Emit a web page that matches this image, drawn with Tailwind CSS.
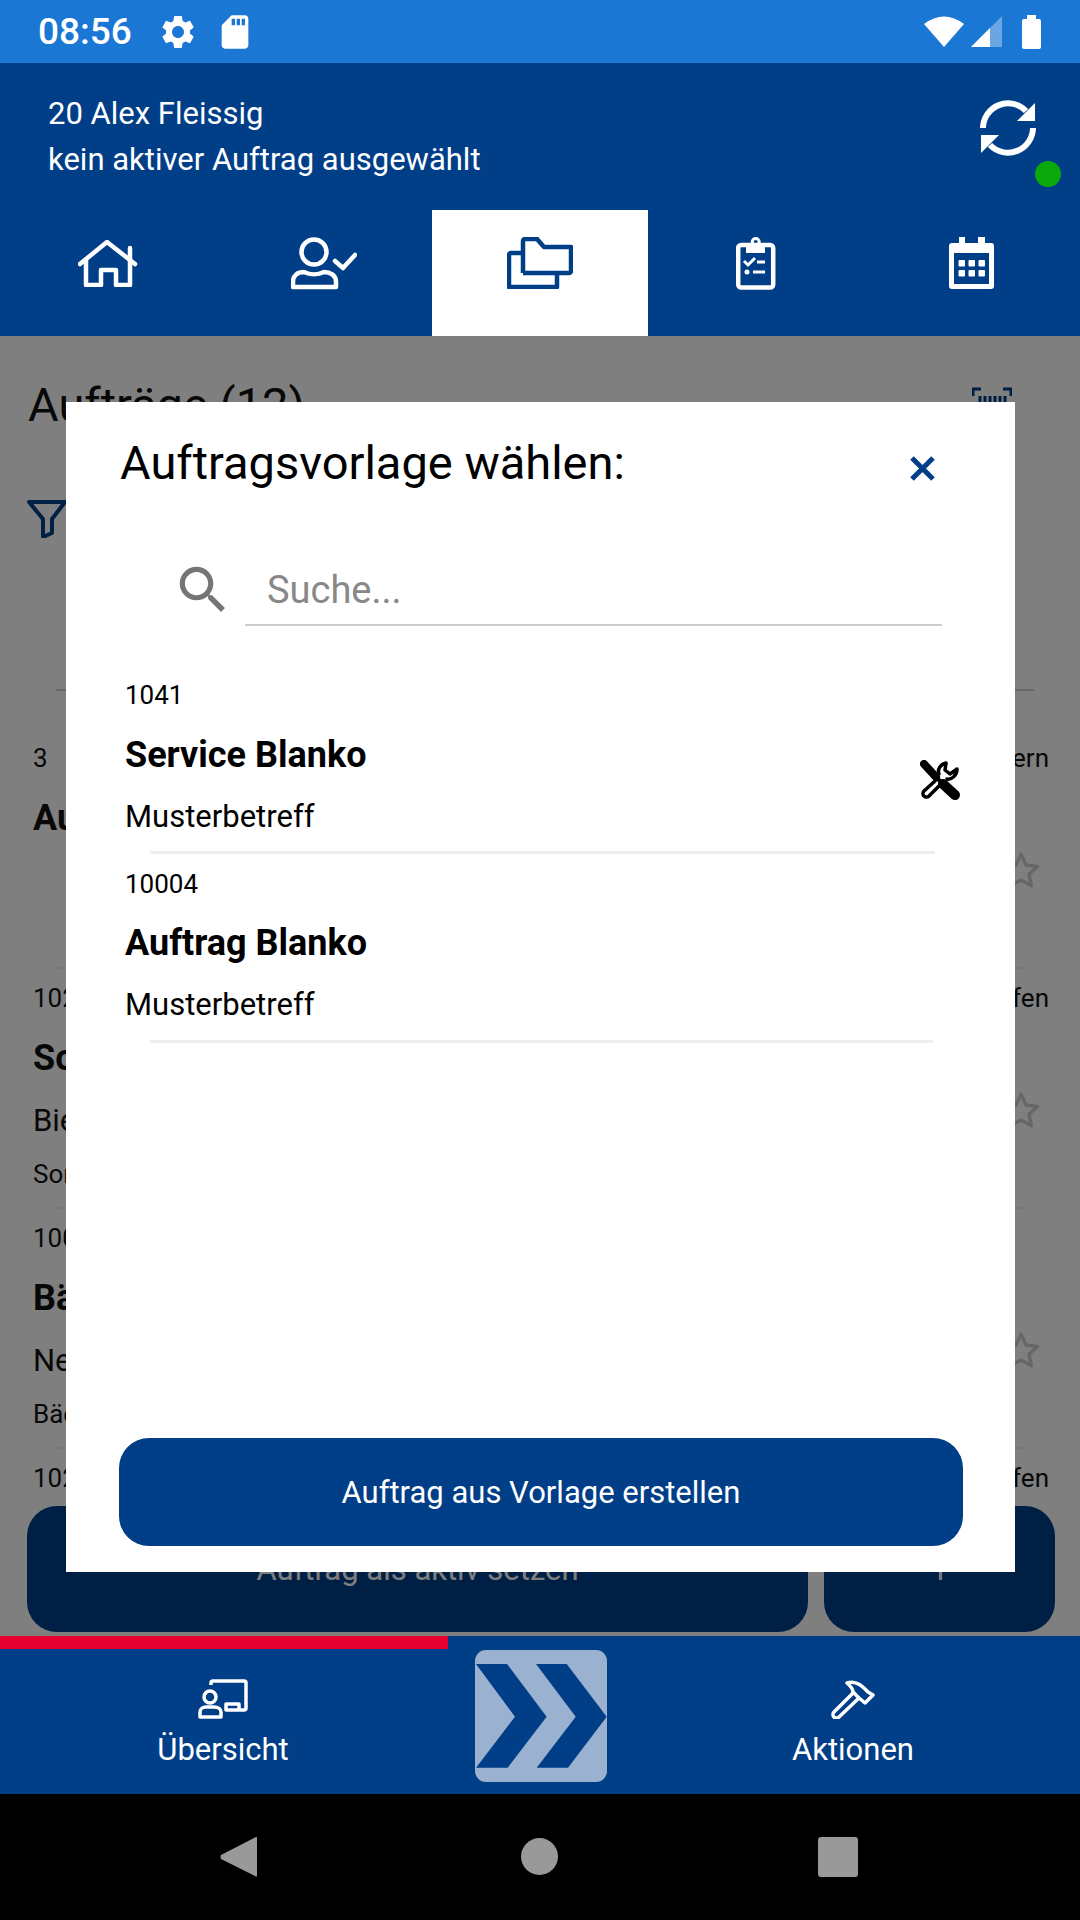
<!DOCTYPE html>
<html lang="de">
<head>
<meta charset="utf-8">
<script src="https://cdn.jsdelivr.net/npm/@tailwindcss/browser@4"></script>
</head>
<body>
<div class="relative w-[1080px] h-[1920px] overflow-hidden flex flex-col bg-white font-['Roboto',sans-serif]">

  <!-- status bar -->
  <div class="h-[63px] shrink-0 bg-[#1a77d4] flex items-center text-white">
    <span class="ml-[38px] w-[92px] text-[37px] font-medium leading-none whitespace-nowrap">08:56</span>
    <svg class="ml-[28px] w-[40px] h-[40px]" viewBox="0 0 24 24" fill="#fff"><path d="M19.14 12.94c.04-.3.06-.61.06-.94 0-.32-.02-.64-.07-.94l2.03-1.58c.18-.14.23-.41.12-.61l-1.92-3.32c-.12-.22-.37-.29-.59-.22l-2.39.96c-.5-.38-1.03-.7-1.62-.94l-.36-2.54c-.04-.24-.24-.41-.48-.41h-3.84c-.24 0-.43.17-.47.41l-.36 2.54c-.59.24-1.13.57-1.62.94l-2.39-.96c-.22-.08-.47 0-.59.22L2.74 8.87c-.12.21-.08.47.12.61l2.03 1.58c-.05.3-.09.63-.09.94s.02.64.07.94l-2.03 1.58c-.18.14-.23.41-.12.61l1.92 3.32c.12.22.37.29.59.22l2.39-.96c.5.38 1.03.7 1.62.94l.36 2.54c.05.24.24.41.48.41h3.84c.24 0 .44-.17.47-.41l.36-2.54c.59-.24 1.13-.56 1.62-.94l2.39.96c.22.08.47 0 .59-.22l1.92-3.32c.12-.22.07-.47-.12-.61l-2.01-1.58zM12 15.6c-1.98 0-3.6-1.62-3.6-3.6s1.62-3.6 3.6-3.6 3.6 1.62 3.6 3.6-1.62 3.6-3.6 3.6z"/></svg>
    <svg class="ml-[17px] w-[40px] h-[40px]" viewBox="0 0 24 24" fill="#fff"><path d="M18 2h-8L4.02 8 4 20c0 1.1.9 2 2 2h12c1.1 0 2-.9 2-2V4c0-1.1-.9-2-2-2zm-6 6h-2V4h2v4zm3 0h-2V4h2v4zm3 0h-2V4h2v4z"/></svg>
    <div class="flex-1"></div>
    <svg class="w-[40px] h-[32px]" viewBox="0 0 40 32" fill="#fff"><path d="M20 31 L0 8 Q20 -7 40 8 Z"/></svg>
    <svg class="ml-[7px] w-[31px] h-[32px]" viewBox="0 0 31 32"><path d="M0 31 L31 0 V31 Z" fill="#fff" fill-opacity="0.35"/><path d="M0 31 L19 12 V31 Z" fill="#fff"/></svg>
    <svg class="ml-[20px] mr-[39px] w-[19px] h-[34px]" viewBox="0 0 19 34" fill="#fff"><path d="M5 0 H14 V4 H17 a2 2 0 0 1 2 2 V32 a2 2 0 0 1 -2 2 H2 a2 2 0 0 1 -2 -2 V6 a2 2 0 0 1 2 -2 H5 Z"/></svg>
  </div>

  <!-- header -->
  <div class="h-[273px] shrink-0 bg-[#003e88] flex flex-col text-white">
    <div class="relative h-[147px] pl-[48px] pt-[28px] text-[31px] leading-[46px]">
      <div>20 Alex Fleissig</div>
      <div>kein aktiver Auftrag ausgewählt</div>
      <svg class="absolute left-[980px] top-[37px] w-[56px] h-[56px]" viewBox="0 0 56 56" fill="none" stroke="#fff" stroke-width="6">
        <path d="M3 28 A25 25 0 0 1 46 11"/><path d="M53 28 A25 25 0 0 1 10 45"/>
        <path d="M55 3 V21 H37 Z" fill="#fff" stroke="none"/><path d="M1 53 V35 H19 Z" fill="#fff" stroke="none"/>
      </svg>
      <div class="absolute left-[1035px] top-[98px] w-[26px] h-[26px] rounded-full bg-[#0aa80a]"></div>
    </div>
    <div class="h-[126px] grid grid-cols-5">
      <div class="flex justify-center pt-[30px]">
        <svg class="w-[60px] h-[47px]" viewBox="0 0 60 47" fill="none" stroke="#fff" stroke-width="4.5" stroke-linecap="round" stroke-linejoin="round"><path d="M2 24 L29 2 L57 24"/><path d="M8 20 V45 H23 V30 H38 V45 H52 V8"/></svg>
      </div>
      <div class="flex justify-center pt-[27px]">
        <svg class="w-[66px] h-[53px]" viewBox="0 0 66 53" fill="none" stroke="#fff" stroke-width="4.5" stroke-linecap="round" stroke-linejoin="round"><circle cx="23" cy="15" r="12.5"/><path d="M2 50 V45 C2 38 7 35 13 35 C19 38 27 38 33 35 C39 35 45 38 45 45 V50 Z"/><path d="M44 24 L52 31 L64 18"/></svg>
      </div>
      <div class="flex justify-center pt-[27px] bg-white">
        <svg class="w-[66px] h-[52px]" viewBox="0 0 66 52" fill="none" stroke="#003e88" stroke-width="4.5" stroke-linejoin="round"><path d="M16 36 V4 a2 2 0 0 1 2 -2 H30 L37 10 H64 V34 a2 2 0 0 1 -2 2 H16"/><path d="M16 16 H4 a2 2 0 0 0 -2 2 V50 H50 V37"/></svg>
      </div>
      <div class="flex justify-center pt-[27px]">
        <svg class="w-[40px] h-[53px]" viewBox="0 0 40 53" fill="none" stroke="#fff"><rect x="2.2" y="8" width="35" height="42.5" rx="3" stroke-width="4.5"/><rect x="10" y="6" width="19" height="10" fill="#fff" stroke="none"/><circle cx="19.7" cy="5" r="3.5" stroke-width="3"/><path d="M8 24 L12 28 L19 21 M21 25 H29 M17 35 H29" stroke-width="3"/><circle cx="11" cy="35" r="2.5" fill="#fff" stroke="none"/></svg>
      </div>
      <div class="flex justify-center pt-[27px]">
        <svg class="w-[46px] h-[53px]" viewBox="0 0 46 53" fill="#fff"><path d="M10 0 H16 V6 H29 V0 H36 V6 H42 a3 3 0 0 1 3 3 V49 a3 3 0 0 1 -3 3 H3 a3 3 0 0 1 -3 -3 V9 a3 3 0 0 1 3 -3 H10 Z M5 16 V47 H40 V16 Z" fill-rule="evenodd"/><rect x="9.5" y="23" width="6.5" height="6.5" rx="1"/><rect x="19.5" y="23" width="6.5" height="6.5" rx="1"/><rect x="29.5" y="23" width="6.5" height="6.5" rx="1"/><rect x="9.5" y="33" width="6.5" height="6.5" rx="1"/><rect x="19.5" y="33" width="6.5" height="6.5" rx="1"/><rect x="29.5" y="33" width="6.5" height="6.5" rx="1"/></svg>
      </div>
    </div>
  </div>

  <!-- main content beneath the dialog -->
  <div class="relative h-[1300px] shrink-0 overflow-hidden bg-white text-[#111]">
    <div class="flex justify-between items-start pl-[28px] pr-[68px] pt-[43px] h-[164px]">
      <div class="text-[47px] leading-[52px]">Aufträge (12)</div>
      <svg class="w-[40px] h-[30px] mt-[8px]" viewBox="0 0 40 30" fill="none" stroke="#003e88" stroke-width="3"><path d="M1 9 V2 H9 M31 2 H39 V9"/><path d="M8 9 V26 M13 9 V26 M18 9 V26 M23 9 V26 M28 9 V26 M33 9 V26"/></svg>
    </div>
    <div class="pl-[27px] h-[189px]">
      <svg class="w-[40px] h-[38px]" viewBox="0 0 40 38" fill="none" stroke="#003e88" stroke-width="4" stroke-linejoin="round"><path d="M2 2 H38 L25 19 V33 L16 37 V19 Z"/></svg>
    </div>
    <div class="ml-[56px] mr-[46px] h-[2px] bg-[#ccc]"></div>
    <div class="h-[276px] pl-[33px] pr-[31px] pt-[52px] flex justify-between">
      <div class="w-[33px] overflow-hidden whitespace-nowrap">
        <div class="text-[26px] leading-[30px]">3</div>
        <div class="text-[36px] leading-[40px] font-bold mt-[25px]">Auftrag</div>
      </div>
      <div class="flex flex-col items-end">
        <div class="w-[35px] overflow-hidden whitespace-nowrap flex justify-end text-[26px] leading-[30px]">Liefern</div>
        <svg class="w-[42px] h-[40px] mr-[7px] mt-[77px]" viewBox="0 0 24 24" fill="none" stroke="#ccc" stroke-width="2" stroke-linejoin="round"><path d="M12 2.5 L15 9 L22 9.8 L16.8 14.5 L18.2 21.5 L12 18 L5.8 21.5 L7.2 14.5 L2 9.8 L9 9 Z"/></svg>
      </div>
    </div>
    <div class="mx-[56px] h-[2px] bg-[#eee]"></div>
    <div class="h-[238px] pl-[33px] pr-[31px] pt-[14px] flex justify-between">
      <div class="w-[33px] overflow-hidden whitespace-nowrap">
        <div class="text-[26px] leading-[30px]">102</div>
        <div class="text-[36px] leading-[40px] font-bold mt-[25px]">Sonderauftrag</div>
        <div class="text-[31px] leading-[36px] mt-[25px]">Bielefeld</div>
        <div class="text-[26px] leading-[30px] mt-[20px]">Sonder</div>
      </div>
      <div class="flex flex-col items-end">
        <div class="w-[35px] overflow-hidden whitespace-nowrap flex justify-end text-[26px] leading-[30px]">Prüfen</div>
        <svg class="w-[42px] h-[40px] mr-[7px] mt-[77px]" viewBox="0 0 24 24" fill="none" stroke="#ccc" stroke-width="2" stroke-linejoin="round"><path d="M12 2.5 L15 9 L22 9.8 L16.8 14.5 L18.2 21.5 L12 18 L5.8 21.5 L7.2 14.5 L2 9.8 L9 9 Z"/></svg>
      </div>
    </div>
    <div class="mx-[56px] h-[2px] bg-[#eee]"></div>
    <div class="h-[238px] pl-[33px] pr-[31px] pt-[14px] flex justify-between">
      <div class="w-[33px] overflow-hidden whitespace-nowrap">
        <div class="text-[26px] leading-[30px]">100</div>
        <div class="text-[36px] leading-[40px] font-bold mt-[25px]">Bäckerei</div>
        <div class="text-[31px] leading-[36px] mt-[25px]">Neustadt</div>
        <div class="text-[26px] leading-[30px] mt-[20px]">Bäcker</div>
      </div>
      <div class="flex flex-col items-end">
        <svg class="w-[42px] h-[40px] mr-[7px] mt-[107px]" viewBox="0 0 24 24" fill="none" stroke="#ccc" stroke-width="2" stroke-linejoin="round"><path d="M12 2.5 L15 9 L22 9.8 L16.8 14.5 L18.2 21.5 L12 18 L5.8 21.5 L7.2 14.5 L2 9.8 L9 9 Z"/></svg>
      </div>
    </div>
    <div class="mx-[56px] h-[2px] bg-[#eee]"></div>
    <div class="pl-[33px] pr-[31px] pt-[14px] flex justify-between">
      <div class="w-[33px] overflow-hidden whitespace-nowrap text-[26px] leading-[30px]">102</div>
      <div class="w-[35px] overflow-hidden whitespace-nowrap flex justify-end text-[26px] leading-[30px]">Prüfen</div>
    </div>

    <!-- bottom buttons of the page -->
    <div class="absolute left-[27px] right-[25px] bottom-[4px] h-[126px] flex gap-[16px] text-white text-[31px]">
      <div class="w-[781px] rounded-[30px] bg-[#003e88] flex items-center justify-center pt-[2px]">Auftrag als aktiv setzen</div>
      <div class="flex-1 rounded-[30px] bg-[#003e88] flex items-center justify-center pt-[2px]">1</div>
    </div>

    <!-- dim -->
    <div class="absolute inset-0 bg-black/50"></div>

    <!-- dialog -->
    <div class="absolute left-[66px] top-[66px] w-[949px] h-[1170px] bg-white text-black flex flex-col">
      <div class="h-[124px] pl-[54px] pr-[80px] pt-[31px] flex justify-between items-start">
        <div class="text-[47px] leading-[60px] whitespace-nowrap">Auftragsvorlage wählen:</div>
        <svg class="w-[25px] h-[25px] mt-[23px]" viewBox="0 0 25 25" fill="none" stroke="#003e88" stroke-width="5"><path d="M2 2 L23 23 M23 2 L2 23"/></svg>
      </div>
      <div class="h-[100px] pl-[106px] flex items-start">
        <svg class="w-[62px] h-[62px] mt-[33px]" viewBox="0 0 24 24" fill="#757575"><path d="M15.5 14h-.79l-.28-.27C15.41 12.59 16 11.11 16 9.5 16 5.91 13.09 3 9.5 3S3 5.91 3 9.5 5.91 16 9.5 16c1.61 0 3.09-.59 4.23-1.57l.27.28v.79l5 4.99L20.49 19l-4.99-5zm-6 0C7.01 14 5 11.99 5 9.5S7.01 5 9.5 5 14 7.01 14 9.5 11.99 14 9.5 14z"/></svg>
        <div class="ml-[11px] w-[697px] h-[100px] border-b-2 border-[#ccc] pl-[22px] pt-[39px] text-[38px] leading-[50px] text-[#888]">Suche...</div>
      </div>
      <div class="relative mt-[39px] h-[189px] pl-[59px] pt-[15px]">
        <div class="text-[26px] leading-[30px]">1041</div>
        <div class="text-[36px] leading-[42px] font-bold mt-[24px]">Service Blanko</div>
        <div class="text-[31px] leading-[40px] mt-[21px]">Musterbetreff</div>
        <div class="absolute left-[84px] w-[785px] top-[186px] h-[3px] bg-[#eee]"></div>
        <svg class="absolute left-[854px] top-[95px] w-[40px] h-[40px]" viewBox="0 0 40 40"><path d="M4 4 L16 17" stroke="#000" stroke-width="8" stroke-linecap="round"/><path d="M13 14 L24 25" stroke="#000" stroke-width="4"/><path d="M23 24 L35 35" stroke="#000" stroke-width="10" stroke-linecap="round"/><path d="M15 21 L4 31 A3 3 0 0 0 9 36 L19 26 M26 3 C21 4 17 9 19 14 M27 19 C32 20 37 15 37 9" fill="none" stroke="#000" stroke-width="3.5" stroke-linecap="round"/><path d="M26 3 L25 10 L30 14 L37 9" fill="none" stroke="#000" stroke-width="3.5" stroke-linejoin="round"/></svg>
      </div>
      <div class="relative h-[189px] pl-[59px] pt-[15px]">
        <div class="text-[26px] leading-[30px]">10004</div>
        <div class="text-[36px] leading-[42px] font-bold mt-[23px]">Auftrag Blanko</div>
        <div class="text-[31px] leading-[40px] mt-[21px]">Musterbetreff</div>
        <div class="absolute left-[84px] w-[783px] top-[186px] h-[3px] bg-[#eee]"></div>
      </div>
      <div class="flex-1"></div>
      <div class="ml-[53px] mr-[52px] mb-[26px] h-[108px] pt-[2px] rounded-[30px] bg-[#003e88] text-white text-[31px] flex items-center justify-center">Auftrag aus Vorlage erstellen</div>
    </div>
  </div>

  <!-- bottom bar -->
  <div class="relative h-[158px] shrink-0 bg-[#003e88] text-white text-[31px]">
    <div class="absolute left-0 top-0 w-[448px] h-[13px] bg-[#e60032]"></div>
    <div class="grid grid-cols-[448px_186px_446px] h-full">
      <div class="flex flex-col items-center pt-[43px] pr-[2px]">
        <svg class="w-[50px] h-[40px]" viewBox="0 0 50 40" fill="none" stroke="#fff" stroke-width="3.5" stroke-linejoin="round"><circle cx="12" cy="18" r="6"/><path d="M2 38 V33 C2 30 5 28 8 28 H16 C20 28 23 30 23 33 V38 Z"/><path d="M13 6 V4 a2 2 0 0 1 2 -2 H46 a2 2 0 0 1 2 2 V29 a2 2 0 0 1 -2 2 H28 V25 H41 V31"/></svg>
        <div class="leading-[36px] mt-[13px]">Übersicht</div>
      </div>
      <div class="flex items-start justify-center pt-[14px]">
        <svg class="w-[132px] h-[132px]" viewBox="0 0 132 132"><rect width="132" height="132" rx="11" fill="#9ab1d0"/><path d="M1 14 H32 L71.6 66.7 L32.7 117.7 H1 L40 66.7 Z M61 14 H91.7 L131.7 66.7 L93 117.7 H61.7 L100.7 66.7 Z" fill="#003e88"/></svg>
      </div>
      <div class="flex flex-col items-center pt-[43px] pr-[8px]">
        <svg class="w-[44px] h-[40px]" viewBox="0 0 44 40" fill="none" stroke="#fff" stroke-width="3.5" stroke-linejoin="round"><path d="M16 4 C24 1 31 6 37 13 L42 16 L34 24 L28 19 L22 13 Q22 9 16 4 Z"/><path d="M22 14 L3 33 a3.5 3.5 0 0 0 5 5 L28 19"/></svg>
        <div class="leading-[36px] mt-[13px]">Aktionen</div>
      </div>
    </div>
  </div>

  <!-- nav bar -->
  <div class="h-[126px] shrink-0 bg-black flex items-start pt-[42px]">
    <svg class="ml-[220px] w-[37px] h-[42px]" viewBox="0 0 37 42" fill="#999"><path d="M36 1 Q37 0 37 3 V39 Q37 42 35 40 L1 23 Q0 21 1 19 Z"/></svg>
    <div class="ml-[264px] mt-[2px] w-[37px] h-[37px] rounded-full bg-[#999]"></div>
    <div class="ml-[260px] mt-[1px] w-[40px] h-[40px] rounded-[3px] bg-[#999]"></div>
  </div>
</div>
</body>
</html>
